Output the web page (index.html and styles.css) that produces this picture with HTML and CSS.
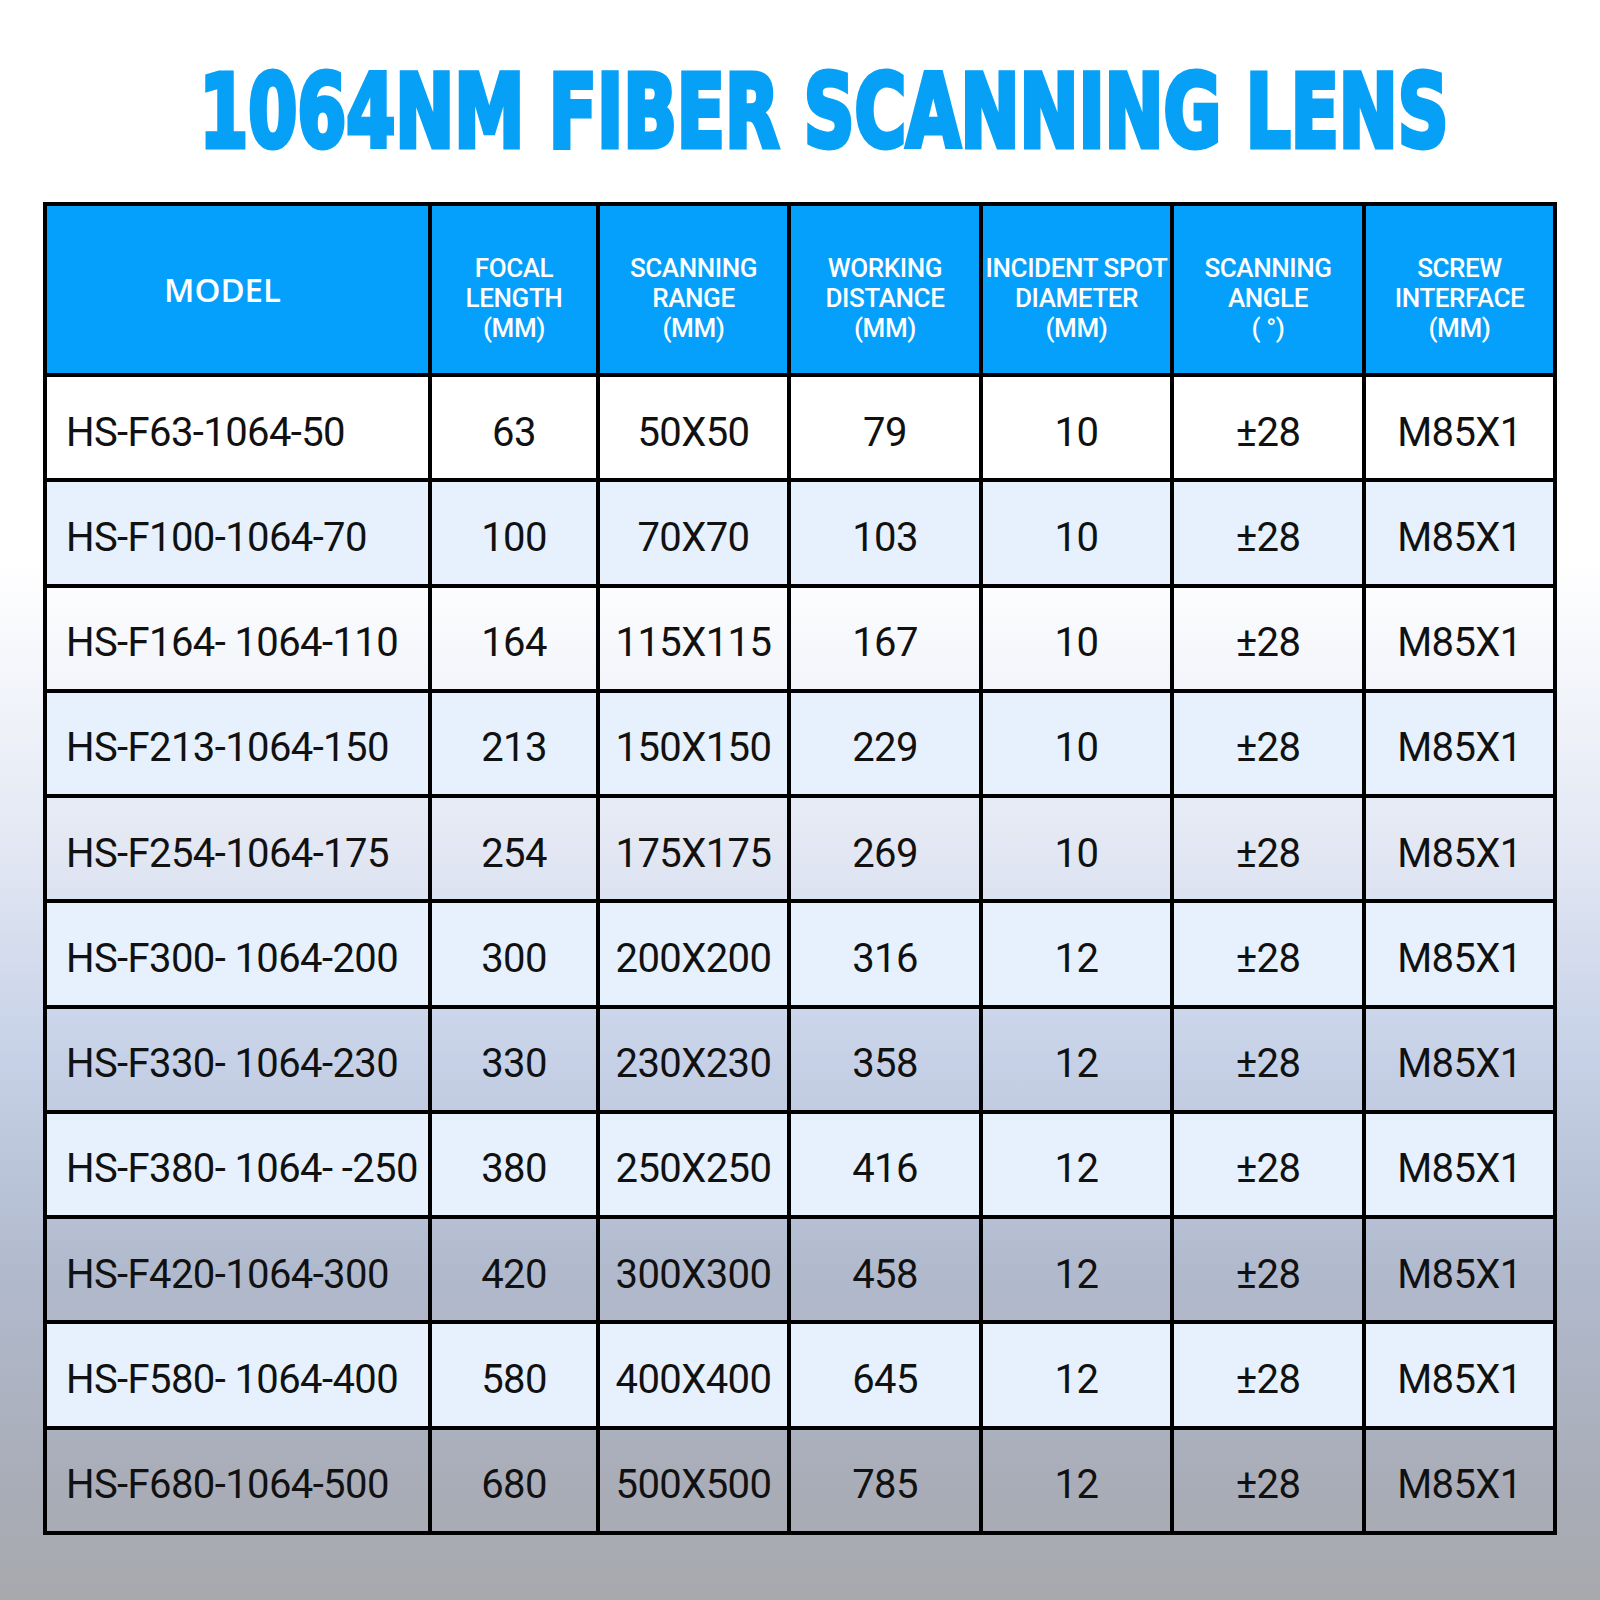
FILE: index.html
```html
<!DOCTYPE html>
<html lang="en">
<head>
<meta charset="utf-8">
<title>1064NM Fiber Scanning Lens</title>
<link rel="stylesheet" href="styles.css">
</head>
<body>
<div class="page">
  <h1 class="title"><span class="title-text">1064NM FIBER SCANNING LENS</span></h1>
  <table class="spec">
    <colgroup>
      <col class="c-model">
      <col class="c-narrow">
      <col class="c-std">
      <col class="c-wide">
      <col class="c-std">
      <col class="c-wide">
      <col class="c-std">
    </colgroup>
    <thead>
      <tr class="head-row">
        <th class="h-model">MODEL</th>
        <th>FOCAL<br>LENGTH<br>(MM)</th>
        <th>SCANNING<br>RANGE<br>(MM)</th>
        <th>WORKING<br>DISTANCE<br>(MM)</th>
        <th>INCIDENT SPOT<br>DIAMETER<br>(MM)</th>
        <th>SCANNING<br>ANGLE<br>( °)</th>
        <th>SCREW<br>INTERFACE<br>(MM)</th>
      </tr>
    </thead>
    <tbody>
      <tr><td class="model">HS-F63-1064-50</td><td>63</td><td>50X50</td><td>79</td><td>10</td><td>±28</td><td>M85X1</td></tr>
      <tr class="alt"><td class="model">HS-F100-1064-70</td><td>100</td><td>70X70</td><td>103</td><td>10</td><td>±28</td><td>M85X1</td></tr>
      <tr><td class="model">HS-F164- 1064-110</td><td>164</td><td>115X115</td><td>167</td><td>10</td><td>±28</td><td>M85X1</td></tr>
      <tr class="alt"><td class="model">HS-F213-1064-150</td><td>213</td><td>150X150</td><td>229</td><td>10</td><td>±28</td><td>M85X1</td></tr>
      <tr><td class="model">HS-F254-1064-175</td><td>254</td><td>175X175</td><td>269</td><td>10</td><td>±28</td><td>M85X1</td></tr>
      <tr class="alt"><td class="model">HS-F300- 1064-200</td><td>300</td><td>200X200</td><td>316</td><td>12</td><td>±28</td><td>M85X1</td></tr>
      <tr><td class="model">HS-F330- 1064-230</td><td>330</td><td>230X230</td><td>358</td><td>12</td><td>±28</td><td>M85X1</td></tr>
      <tr class="alt"><td class="model">HS-F380- 1064- -250</td><td>380</td><td>250X250</td><td>416</td><td>12</td><td>±28</td><td>M85X1</td></tr>
      <tr><td class="model">HS-F420-1064-300</td><td>420</td><td>300X300</td><td>458</td><td>12</td><td>±28</td><td>M85X1</td></tr>
      <tr class="alt"><td class="model">HS-F580- 1064-400</td><td>580</td><td>400X400</td><td>645</td><td>12</td><td>±28</td><td>M85X1</td></tr>
      <tr><td class="model">HS-F680-1064-500</td><td>680</td><td>500X500</td><td>785</td><td>12</td><td>±28</td><td>M85X1</td></tr>
    </tbody>
  </table>
</div>
</body>
</html>
```

FILE: styles.css
```css
html, body {
  margin: 0;
  padding: 0;
}

body {
  width: 1600px;
  height: 1600px;
  overflow: hidden;
  background: linear-gradient(180deg,
    #ffffff 0px,
    #ffffff 560px,
    #e2e7f3 850px,
    #c6d1e7 1060px,
    #b1bacd 1270px,
    #a9adb8 1480px,
    #a8a9ad 1600px);
  font-family: Roboto, "Liberation Sans", sans-serif;
}

.page {
  display: flex;
  flex-direction: column;
  padding-left: 43px;
}

.title {
  margin: 0;
  height: 202px;
  box-sizing: border-box;
  padding-top: 57px;
  padding-left: 48px;
  display: flex;
  justify-content: center;
  width: 1514px;
}

.title-text {
  display: inline-block;
  font-family: "DejaVu Sans Condensed", "DejaVu Sans", sans-serif;
  font-stretch: condensed;
  font-weight: bold;
  font-size: 101px;
  line-height: 110px;
  color: #06a0f6;
  -webkit-text-stroke: 5px #06a0f6;
  white-space: nowrap;
  transform: scaleX(0.775);
  transform-origin: center;
}

.spec {
  border-collapse: separate;
  border-spacing: 0;
  table-layout: fixed;
  width: 1514px;
  border-top: 4px solid #000;
  border-left: 4px solid #000;
}

.c-model { width: 385px; }
.c-narrow { width: 168px; }
.c-std { width: 191px; }
.c-wide { width: 192px; }

.spec th,
.spec td {
  box-sizing: border-box;
  border-right: 4px solid #000;
  border-bottom: 4px solid #000;
  padding: 0;
  text-align: center;
  vertical-align: middle;
  overflow: visible;
  white-space: nowrap;
}

.head-row {
  height: 171px;
}

.spec th {
  background: #05a0fb;
  color: #ffffff;
  font-family: Roboto, "Liberation Sans", sans-serif;
  font-weight: 500;
  font-size: 26px;
  line-height: 30px;
  letter-spacing: -0.4px;
  padding-top: 16px;
}

.spec th.h-model {
  font-family: "Open Sans", "Noto Sans", sans-serif;
  font-weight: 600;
  font-size: 33px;
  letter-spacing: 0;
  padding-top: 0;
  padding-right: 30px;
}

.spec tbody tr {
  height: 105.27px;
}

.spec td {
  font-family: Roboto, "Liberation Sans", sans-serif;
  font-weight: 400;
  font-size: 40px;
  letter-spacing: -0.6px;
  color: #111111;
  background: transparent;
  padding-top: 9px;
}

.spec tr.alt td {
  background: #e6f1fd;
}

.spec td.model {
  text-align: left;
  padding-left: 19px;
}
```
